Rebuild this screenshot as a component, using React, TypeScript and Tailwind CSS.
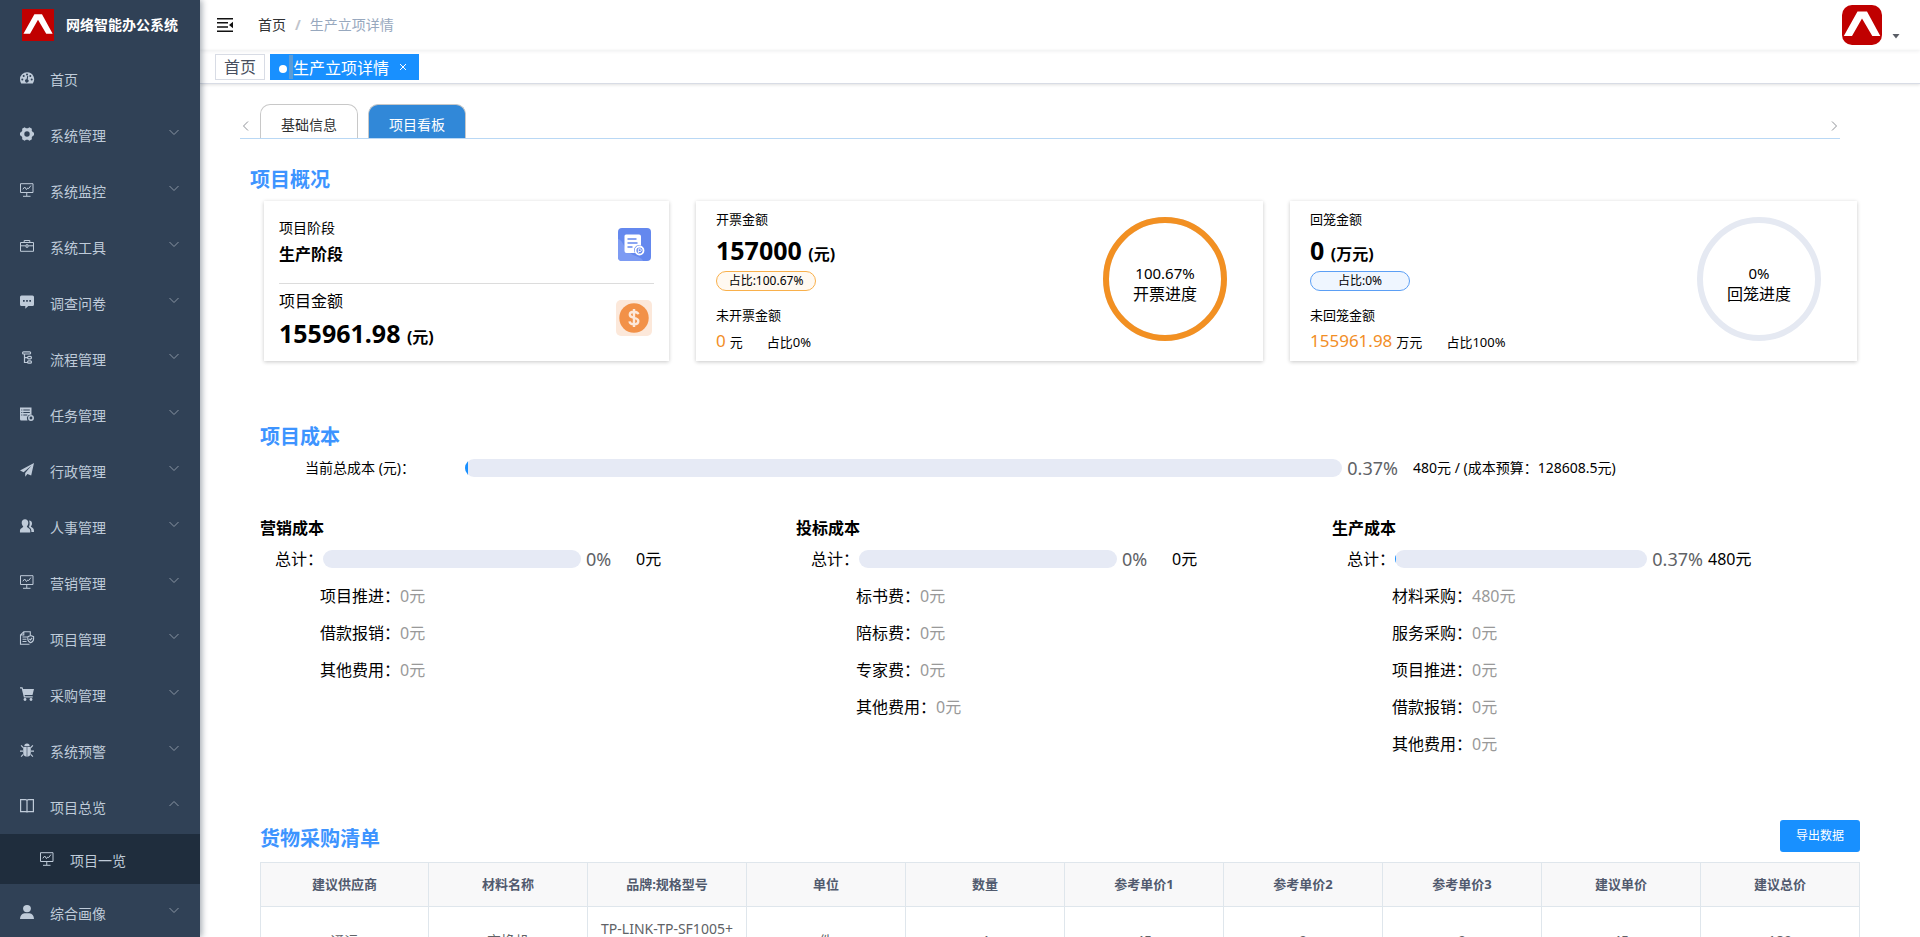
import type { ReactNode } from "react";

const icons: Record<string, ReactNode> = {
  dashboard: (
    <>
      <path fill="currentColor" d="M7 1.3a7 7 0 0 0-7 7c0 1.5.4 2.9 1.200 4.100h11.600A7 7 0 0 0 7 1.300z" />
      <g fill="#304156">
        <circle cx="2.300" cy="8.400" r="1" />
        <circle cx="3.700" cy="5" r="1" />
        <circle cx="7" cy="3.500" r="1" />
        <circle cx="10.300" cy="5" r="1" />
        <circle cx="11.700" cy="8.400" r="1" />
        <path d="M7.300 4.800l.9.200-.5 3.400a1.700 1.700 0 1 1-1.200-.2z" />
      </g>
    </>
  ),
  system: (
    <path
      fill="currentColor"
      fillRule="evenodd"
      d="M4.600 0.200L6 1.200h2l1.400-1 2.500 1.500-.2 1.700 1 1.700 1.300.7v2.400l-1.300.7-1 1.700.2 1.700-2.500 1.500-1.400-1H6l-1.400 1-2.500-1.500.2-1.700-1-1.700L0 8.200V5.800l1.300-.7 1-1.700-.2-1.700zM7 4.300a2.700 2.700 0 1 0 0 5.400 2.700 2.700 0 0 0 0-5.400z"
    />
  ),
  monitor: (
    <g fill="none" stroke="currentColor">
      <path d="M.5 .7h12.500v8.800H.5zM6.750 9.500v3.500M3 13.300h7.500" />
      <path d="M2.800 6.300l1.900-2.300 1.800 2.600 1.300-1.700.8.700 2.300-3" />
    </g>
  ),
  tool: (
    <g fill="none" stroke="currentColor">
      <path d="M.5 3.500h13v8.800H.5zM4.200 3.500V1.500h5.600v2M.5 6.800h5.300M8.200 6.800h5.300M6 5.800h2v2.400H6z" />
    </g>
  ),
  message: (
    <>
      <path fill="currentColor" d="M1.500 .5h11A1.500 1.500 0 0 1 14 2v7.500a1.500 1.500 0 0 1-1.500 1.500H8.300L5.300 13.700V11H1.500A1.500 1.500 0 0 1 0 9.500V2A1.500 1.500 0 0 1 1.500.5z" />
      <path fill="#304156" d="M3 5h1.700v1.700H3zM6.150 5h1.700v1.700h-1.700zM9.300 5H11v1.700H9.300z" />
    </>
  ),
  flow: (
    <g fill="none" stroke="currentColor" strokeWidth="1.200">
      <rect x="2.600" y=".8" width="8" height="2.200" rx="1" />
      <path d="M4.500 3v8.500h3.500M4.500 6.600h3.500" />
      <rect x="7.600" y="5.400" width="3.800" height="2.400" rx="1" />
      <rect x="7.600" y="9.800" width="3.800" height="2.400" rx="1" />
    </g>
  ),
  job: (
    <>
      <path fill="currentColor" d="M0 .5h11.500V8a3.500 3.500 0 0 0-4.300 4.800L7.500 13.500H1.200A1.200 1.200 0 0 1 0 12.300z" />
      <path stroke="#304156" fill="none" d="M3.300 3h6.500M3.300 5.500h6.500M3.300 8h4M1.300 3h1M1.300 5.500h1M1.300 8h1" />
      <circle cx="11" cy="11" r="2.200" fill="none" stroke="currentColor" strokeWidth="1.500" />
    </>
  ),
  guide: (
    <path fill="currentColor" d="M14 0L0 7.600l3.600 1.600L11.500 2.600 5.200 10v3.800l2.200-2.900 3.800 1.700z" />
  ),
  peoples: (
    <g fill="currentColor">
      <path d="M5 .3c2 0 3.300 1.500 3.300 3.500 0 1.500-.6 2.900-1.500 3.600.1 1 2.900 1.600 3.300 3.400.2.900.2 2.700.2 2.700H0s-.1-1.800.1-2.700C.5 9 3.200 8.400 3.300 7.400 2.300 6.700 1.700 5.300 1.700 3.800 1.700 1.800 3 .3 5 .3z" />
      <path d="M9 1.500c1.900 0 3 1.200 3 2.900 0 1.200-.5 2.300-1.200 2.900.1.900 2.500 1.500 2.900 3 .3.900.3 2.700.3 2.700h-2.600c0-2.700-.4-3.600-2.700-4.900 .7-1.200 1-2.400.9-4.100 0-.9-.2-1.700-.6-2.500z" />
    </g>
  ),
  project: (
    <g fill="none" stroke="currentColor" strokeWidth="1.100">
      <path d="M9.500 13.300h-9V4l3.300-3.300h6.500V4M.5 4h3.300V.8M2.500 6h4.500M2.500 8.300h4M2.500 10.500h4" />
      <path d="M10.700 4.500l2.900 1.200v2.300c0 1.800-1.200 3-2.900 3.800-1.700-.8-2.900-2-2.900-3.800V5.700z" />
      <path d="M9.400 7.800l1 1.100 1.800-2" />
    </g>
  ),
  shopping: (
    <g fill="currentColor">
      <path d="M0 .3h2.500l.6 1.700H14L12.500 8H4.600l.3 1.300h7.800v1.200H3.900L1.700 1.500H0z" />
      <circle cx="5" cy="12.500" r="1.400" />
      <circle cx="11" cy="12.500" r="1.400" />
    </g>
  ),
  bug: (
    <g fill="currentColor">
      <path d="M4.300 3.200a2.700 2.700 0 0 1 5.400 0z" />
      <path d="M3.200 4h3.500v9.800C4.300 13.500 3.200 12 3.200 9.800zM7.300 4h3.500v5.800c0 2.200-1.100 3.700-3.500 4z" />
      <path d="M0 7.600h3v1.100H0zM11 7.600h3v1.100h-3zM.7 2.800l.8-.7 2 2-.8.8zM13.300 2.800l-.8-.7-2 2 .8.800zM.7 13.300l.8.700 2.200-2.300-.8-.7zM13.300 13.300l-.8.700-2.200-2.300.8-.7z" />
    </g>
  ),
  book: (
    <path fill="none" stroke="currentColor" strokeWidth="1.200" d="M.6.600h4.900c.8 0 1.500.5 1.500 1.200v11.600c0-.4-.7-.7-1.500-.7H.6zM13.400.600H8.500C7.700.6 7 1.100 7 1.800v11.600c0-.4.7-.7 1.500-.7h4.900z" />
  ),
  user: (
    <g fill="currentColor">
      <ellipse cx="7" cy="3.600" rx="3.900" ry="3.600" />
      <path d="M0 14c0-3.500 2-5.200 4.500-5.700h5C12 8.800 14 10.500 14 14z" />
    </g>
  ),
};

const menu = [
  { icon: "dashboard", label: "首页" },
  { icon: "system", label: "系统管理", arrow: "down" },
  { icon: "monitor", label: "系统监控", arrow: "down" },
  { icon: "tool", label: "系统工具", arrow: "down" },
  { icon: "message", label: "调查问卷", arrow: "down" },
  { icon: "flow", label: "流程管理", arrow: "down" },
  { icon: "job", label: "任务管理", arrow: "down" },
  { icon: "guide", label: "行政管理", arrow: "down" },
  { icon: "peoples", label: "人事管理", arrow: "down" },
  { icon: "monitor", label: "营销管理", arrow: "down" },
  { icon: "project", label: "项目管理", arrow: "down" },
  { icon: "shopping", label: "采购管理", arrow: "down" },
  { icon: "bug", label: "系统预警", arrow: "down" },
  { icon: "book", label: "项目总览", arrow: "up", children: [{ icon: "monitor", label: "项目一览" }] },
  { icon: "user", label: "综合画像", arrow: "down" },
];

function MenuIcon({ name }: { name: string }) {
  return (
    <svg viewBox="0 0 14 14" className="size-3.5 shrink-0 overflow-visible" aria-hidden="true">
      {icons[name]}
    </svg>
  );
}

function Chevron({ dir, className }: { dir: "up" | "down" | "left" | "right"; className: string }) {
  const d = {
    down: "M1.500 4l4.500 4.500L10.500 4",
    up: "M1.500 8L6 3.500 10.500 8",
    left: "M8 1.500L3.500 6 8 10.500",
    right: "M4 1.500L8.500 6 4 10.500",
  }[dir];
  return (
    <svg viewBox="0 0 12 12" className={className} fill="none" stroke="currentColor" aria-hidden="true">
      <path d={d} />
    </svg>
  );
}

function Logo({ className }: { className: string }) {
  return (
    <svg viewBox="0 0 40 40" className={className} role="img" aria-label="logo">
      <rect width="40" height="40" fill="#c00000" />
      <path fill="#fff" d="M15.500 6.500h9.500L38.300 31h-8L20 13.500 10 31H1.800z" />
    </svg>
  );
}

function Sidebar() {
  return (
    <aside className="z-20 flex w-[200px] shrink-0 flex-col overflow-hidden bg-[#304156] text-[#bfcbd9] shadow-[2px_0_6px_rgba(0,21,41,0.35)]">
      <a href="#home" className="flex h-[50px] shrink-0 items-center justify-center gap-3">
        <Logo className="size-8" />
        <span className="text-sm font-bold text-white">网络智能办公系统</span>
      </a>
      <nav>
        <ul>
          {menu.map((m) => (
            <li key={m.label}>
              <a href="#menu" className="flex h-14 items-center gap-4 px-5 text-sm">
                <MenuIcon name={m.icon} />
                <span className="grow pt-1">{m.label}</span>
                {m.arrow && <Chevron dir={m.arrow as "up" | "down"} className="mb-1 size-3 text-[#8a95a3]" />}
              </a>
              {m.children?.map((c) => (
                <a key={c.label} href="#menu" className="flex h-[50px] items-center gap-4 bg-[#1f2d3d] px-10 text-sm">
                  <MenuIcon name={c.icon} />
                  <span className="pt-1">{c.label}</span>
                </a>
              ))}
            </li>
          ))}
        </ul>
      </nav>
    </aside>
  );
}

function TopBar() {
  return (
    <header className="z-10 flex h-[50px] shrink-0 items-center pl-[17px] pr-5 shadow-[0_1px_4px_rgba(0,21,41,0.08)]">
      <button type="button" aria-label="收起菜单" className="mr-[25px]">
        <svg viewBox="0 0 16 14" className="h-3.5 w-4" aria-hidden="true">
          <path fill="#111" d="M0 0h16v1.500H0zM0 4h11v1.500H0zM0 8.300h11v1.500H0zM0 12.500h16V14H0zM16 3.800v6.400L12 7z" />
        </svg>
      </button>
      <nav className="flex items-center text-sm" aria-label="breadcrumb">
        <a href="#home" className="text-[#303133]">首页</a>
        <span className="mx-[9px] font-bold text-[#c0c4cc]">/</span>
        <span className="text-[#97a8be]">生产立项详情</span>
      </nav>
      <button type="button" aria-label="用户菜单" className="ml-auto flex h-10 items-end gap-[10px]">
        <Logo className="size-10 rounded-[10px]" />
        <svg viewBox="0 0 8 5" className="mb-1.5 h-[5px] w-2 text-[#5a5e66]" aria-hidden="true">
          <path fill="currentColor" d="M.5 0h7L4 4.500z" />
        </svg>
      </button>
    </header>
  );
}

function TagsBar() {
  return (
    <div className="flex h-[34px] shrink-0 items-center gap-[5px] border-b border-[#d8dce5] pl-[15px] shadow-[0_1px_3px_rgba(0,0,0,0.12)]">
      <a href="#home" className="flex h-[26px] items-center border border-[#d8dce5] px-2 text-base text-[#495060]">
        首页
      </a>
      <a href="#detail" className="flex h-[26px] items-center bg-[#1890ff] pl-[9px] pr-3 text-base text-white">
        <span className="mt-1 size-2 rounded-full bg-white" />
        <span className="ml-0.5 h-6 w-1 bg-[#5b9bd5]" />
        <span className="pt-0.5">生产立项详情</span>
        <svg viewBox="0 0 8 8" className="ml-2.5 size-2" stroke="currentColor" aria-hidden="true">
          <path d="M1 1l6 6M7 1L1 7" />
        </svg>
      </a>
    </div>
  );
}

function Tabs() {
  return (
    <div className="ml-10 mr-20 flex h-[35px] items-end border-b border-[#b9d8f5]">
      <button type="button" aria-label="上一个" className="mb-1.5 w-5 text-[#909399]">
        <Chevron dir="left" className="size-3" />
      </button>
      <div role="tablist" className="flex grow gap-2.5 text-sm">
        <button type="button" role="tab" className="h-[34px] rounded-t-[10px] border border-b-0 border-[#c8c8c8] px-5 pt-1.5 leading-5 text-[#303133]">
          基础信息
        </button>
        <button type="button" role="tab" aria-selected="true" className="h-[34px] rounded-t-[10px] border border-b-0 border-[#c8c8c8] bg-[#3188d8] px-5 pt-1.5 leading-5 text-white">
          项目看板
        </button>
      </div>
      <button type="button" aria-label="下一个" className="mb-1.5 text-[#909399]">
        <Chevron dir="right" className="size-3" />
      </button>
    </div>
  );
}

function StageIcon() {
  return (
    <svg viewBox="0 0 33 33" className="size-[33px]" aria-hidden="true">
      <rect width="33" height="33" rx="4" fill="#6488ee" />
      <path d="M0 11c4 0 6 9 12 14 5 4 12 4 13 8H4a4 4 0 0 1-4-4z" fill="#7d9bf3" />
      <path d="M8 6.500h13a2 2 0 0 1 2 2v9a5 5 0 0 0-6 7.500H8.500a2 2 0 0 1-2-2V8a1.500 1.500 0 0 1 1.500-1.500z" fill="#fff" />
      <path d="M9.500 11h9M9.500 15h10M9.500 19h5" stroke="#6488ee" strokeWidth="1.300" />
      <circle cx="21.500" cy="22.500" r="4" fill="#6488ee" stroke="#fff" strokeWidth="1.800" />
      <path d="M20.300 20.800h1.700a1.300 1.300 0 0 1 0 2.700h-1.700zM20.300 23.500v1.500" stroke="#fff" fill="none" strokeWidth=".9" />
    </svg>
  );
}

function MoneyIcon() {
  return (
    <svg viewBox="0 0 36 36" className="size-9" aria-hidden="true">
      <rect width="36" height="36" rx="5" fill="#fce8da" />
      <circle cx="18" cy="18" r="14.700" fill="#f29148" />
      <path
        d="M22.300 14.300c-.4-1.700-2-2.600-4.300-2.600-2.500 0-4.200 1.100-4.200 3 0 4.400 8.500 1.900 8.500 6.300 0 2.100-1.800 3.300-4.300 3.300s-4.200-1-4.500-2.900M18 9v18"
        fill="none"
        stroke="#fce8da"
        strokeWidth="2.400"
      />
    </svg>
  );
}

const card = "h-40 bg-white shadow-[0_1px_4px_rgba(0,0,0,0.22)]";

function StageCard() {
  return (
    <section className={card + " flex flex-col px-[15px]"}>
      <div className="flex h-[83px] items-center justify-between border-b border-[#dcdcdc] pr-[3px]">
        <div>
          <p className="text-sm leading-5">项目阶段</p>
          <p className="pt-1 text-base font-bold leading-6">生产阶段</p>
        </div>
        <div className="pt-1">
          <StageIcon />
        </div>
      </div>
      <div className="flex grow items-center justify-between pr-0.5">
        <div className="pb-1">
          <p className="text-base leading-6">项目金额</p>
          <p className="text-[25px] font-bold leading-10">
            155961.98 <span className="text-base">(元)</span>
          </p>
        </div>
        <div className="pb-2.5">
          <MoneyIcon />
        </div>
      </div>
    </section>
  );
}

type MoneyProps = {
  title: string;
  amount: string;
  unit: string;
  ratio: string;
  restTitle: string;
  rest: string;
  restUnit: string;
  restRatio: string;
  ringTitle: string;
  percent: number;
  pill: string;
  ring: string;
};

function MoneyCard(p: MoneyProps) {
  const length = 2 * Math.PI * 59;
  return (
    <section className={card + " flex justify-between pl-5 pr-[35px] pt-1.5"}>
      <div>
        <p className="text-[13px] leading-6">{p.title}</p>
        <p className="pb-0.5 text-[25px] font-bold leading-[38px]">
          {p.amount} <span className="text-base">{p.unit}</span>
        </p>
        <p className={"flex h-5 w-[100px] items-center justify-center rounded-full border text-xs " + p.pill}>占比:{p.ratio}</p>
        <p className="mt-3 text-[13px] leading-6">{p.restTitle}</p>
        <p className="flex items-baseline text-[13px] leading-7">
          <span className="mr-1 text-[17px] text-[#f28e26]">{p.rest}</span>
          {p.restUnit}
          <span className="ml-6">占比{p.restRatio}</span>
        </p>
      </div>
      <div className="mt-[9px] grid size-[126px]">
        <svg viewBox="0 0 126 126" className="col-start-1 row-start-1 size-full" fill="none" strokeWidth="6" aria-hidden="true">
          <circle cx="63" cy="63" r="59" stroke="#e5e9f2" />
          <circle
            cx="63"
            cy="63"
            r="59"
            stroke={p.ring}
            strokeDasharray={`${(length * p.percent) / 100} ${length}`}
            transform="rotate(-90 63 63)"
          />
        </svg>
        <div className="col-start-1 row-start-1 flex flex-col items-center justify-center pt-2.5 text-base leading-[21px]">
          <span className="text-[15px]">{p.ratio}</span>
          <span>{p.ringTitle}</span>
        </div>
      </div>
    </section>
  );
}

function Progress({ percent, className }: { percent: number; className: string }) {
  return (
    <div className={"flex items-center " + className}>
      <div className="h-[18px] grow overflow-hidden rounded-full bg-[#e6eaf5]">
        <div className="h-full bg-[#1890ff]" style={{ width: `${percent}%` }} />
      </div>
      <span className="ml-[5px] min-w-[45px] text-lg leading-[18px] text-[#606266]">{percent}%</span>
    </div>
  );
}

const costs = [
  {
    title: "营销成本",
    percent: 0,
    total: "0元",
    rows: [["项目推进", "0元"], ["借款报销", "0元"], ["其他费用", "0元"]],
  },
  {
    title: "投标成本",
    percent: 0,
    total: "0元",
    rows: [["标书费", "0元"], ["陪标费", "0元"], ["专家费", "0元"], ["其他费用", "0元"]],
  },
  {
    title: "生产成本",
    percent: 0.37,
    total: "480元",
    rows: [["材料采购", "480元"], ["服务采购", "0元"], ["项目推进", "0元"], ["借款报销", "0元"], ["其他费用", "0元"]],
  },
];

const heading = "text-xl font-bold leading-7 text-[#3d94ff]";

function CostSection() {
  return (
    <section className="pl-[60px] pr-[52px] pt-[62px]">
      <h2 className={heading}>项目成本</h2>
      <div className="mt-2 flex h-[18px] items-center pl-[45px] text-sm">
        <span className="w-40 shrink-0">当前总成本 (元)：</span>
        <Progress percent={0.37} className="w-[933px]" />
        <span className="ml-[15px]">480元 / (成本预算：128608.5元)</span>
      </div>
      <div className="mt-[39px] grid grid-cols-3 text-base">
        {costs.map((c) => (
          <div key={c.title}>
            <h3 className="font-bold leading-6">{c.title}</h3>
            <div className="mt-[7px] flex h-6 items-center pl-[15px]">
              <span className="w-12 shrink-0">总计：</span>
              <Progress percent={c.percent} className="w-[308px]" />
              <span className="ml-[5px]">{c.total}</span>
            </div>
            <dl className="mt-1.5 pl-[60px]">
              {c.rows.map(([k, v]) => (
                <div key={k} className="flex h-[37px] items-center">
                  <dt>{k}：</dt>
                  <dd className="text-[#999]">{v}</dd>
                </div>
              ))}
            </dl>
          </div>
        ))}
      </div>
    </section>
  );
}

const columns = ["建议供应商", "材料名称", "品牌:规格型号", "单位", "数量", "参考单价1", "参考单价2", "参考单价3", "建议单价", "建议总价"];
const rows = [["通远", "交换机", "TP-LINK-TP-SF1005+ 5口百兆", "件", "4", "45", "0", "0", "45", "180"]];

function PurchaseSection() {
  return (
    <section className="px-[60px] pt-[58px]">
      <div className="flex h-8 items-center justify-between">
        <h2 className={heading + " pt-1.5"}>货物采购清单</h2>
        <button type="button" className="h-8 w-20 rounded-[3px] bg-[#1890ff] text-xs text-white">
          导出数据
        </button>
      </div>
      <table className="mt-2.5 w-full table-fixed border-collapse text-center text-[#606266]">
        <thead>
          <tr className="h-11 bg-[#f8f8f9] text-[13px] text-[#515a6e]">
            {columns.map((c, i) => (
              <th key={c} className={"border border-[#dfe6ec] font-bold " + (i === 0 ? "w-[168px]" : "")}>
                {c}
              </th>
            ))}
          </tr>
        </thead>
        <tbody>
          {rows.map((r) => (
            <tr key={r[0]} className="text-sm leading-6">
              {r.map((v, i) => (
                <td key={i} className="border border-[#dfe6ec] px-2.5 py-2.5">
                  {v}
                </td>
              ))}
            </tr>
          ))}
        </tbody>
      </table>
    </section>
  );
}

export default function App() {
  return (
    <div className="flex h-screen overflow-hidden bg-white font-['Noto_Sans','Noto_Sans_CJK_SC',sans-serif] text-black">
      <Sidebar />
      <div className="flex min-w-0 grow flex-col">
        <TopBar />
        <TagsBar />
        <main className="grow overflow-y-auto pb-10 pt-5 [scrollbar-width:none]">
          <Tabs />
          <h2 className={heading + " ml-[50px] mt-[27px]"}>项目概况</h2>
          <div className="ml-16 mr-[63px] mt-[7px] grid grid-cols-[5fr_7fr_7fr] gap-[27px]">
            <StageCard />
            <MoneyCard
              title="开票金额"
              amount="157000"
              unit="(元)"
              ratio="100.67%"
              restTitle="未开票金额"
              rest="0"
              restUnit="元"
              restRatio="0%"
              ringTitle="开票进度"
              percent={100}
              pill="border-[#f9b04b] bg-[#fff9f1]"
              ring="#f29022"
            />
            <MoneyCard
              title="回笼金额"
              amount="0"
              unit="(万元)"
              ratio="0%"
              restTitle="未回笼金额"
              rest="155961.98"
              restUnit="万元"
              restRatio="100%"
              ringTitle="回笼进度"
              percent={0}
              pill="border-[#5b9ff5] bg-[#eff6ff]"
              ring="#1890ff"
            />
          </div>
          <CostSection />
          <PurchaseSection />
        </main>
      </div>
    </div>
  );
}
